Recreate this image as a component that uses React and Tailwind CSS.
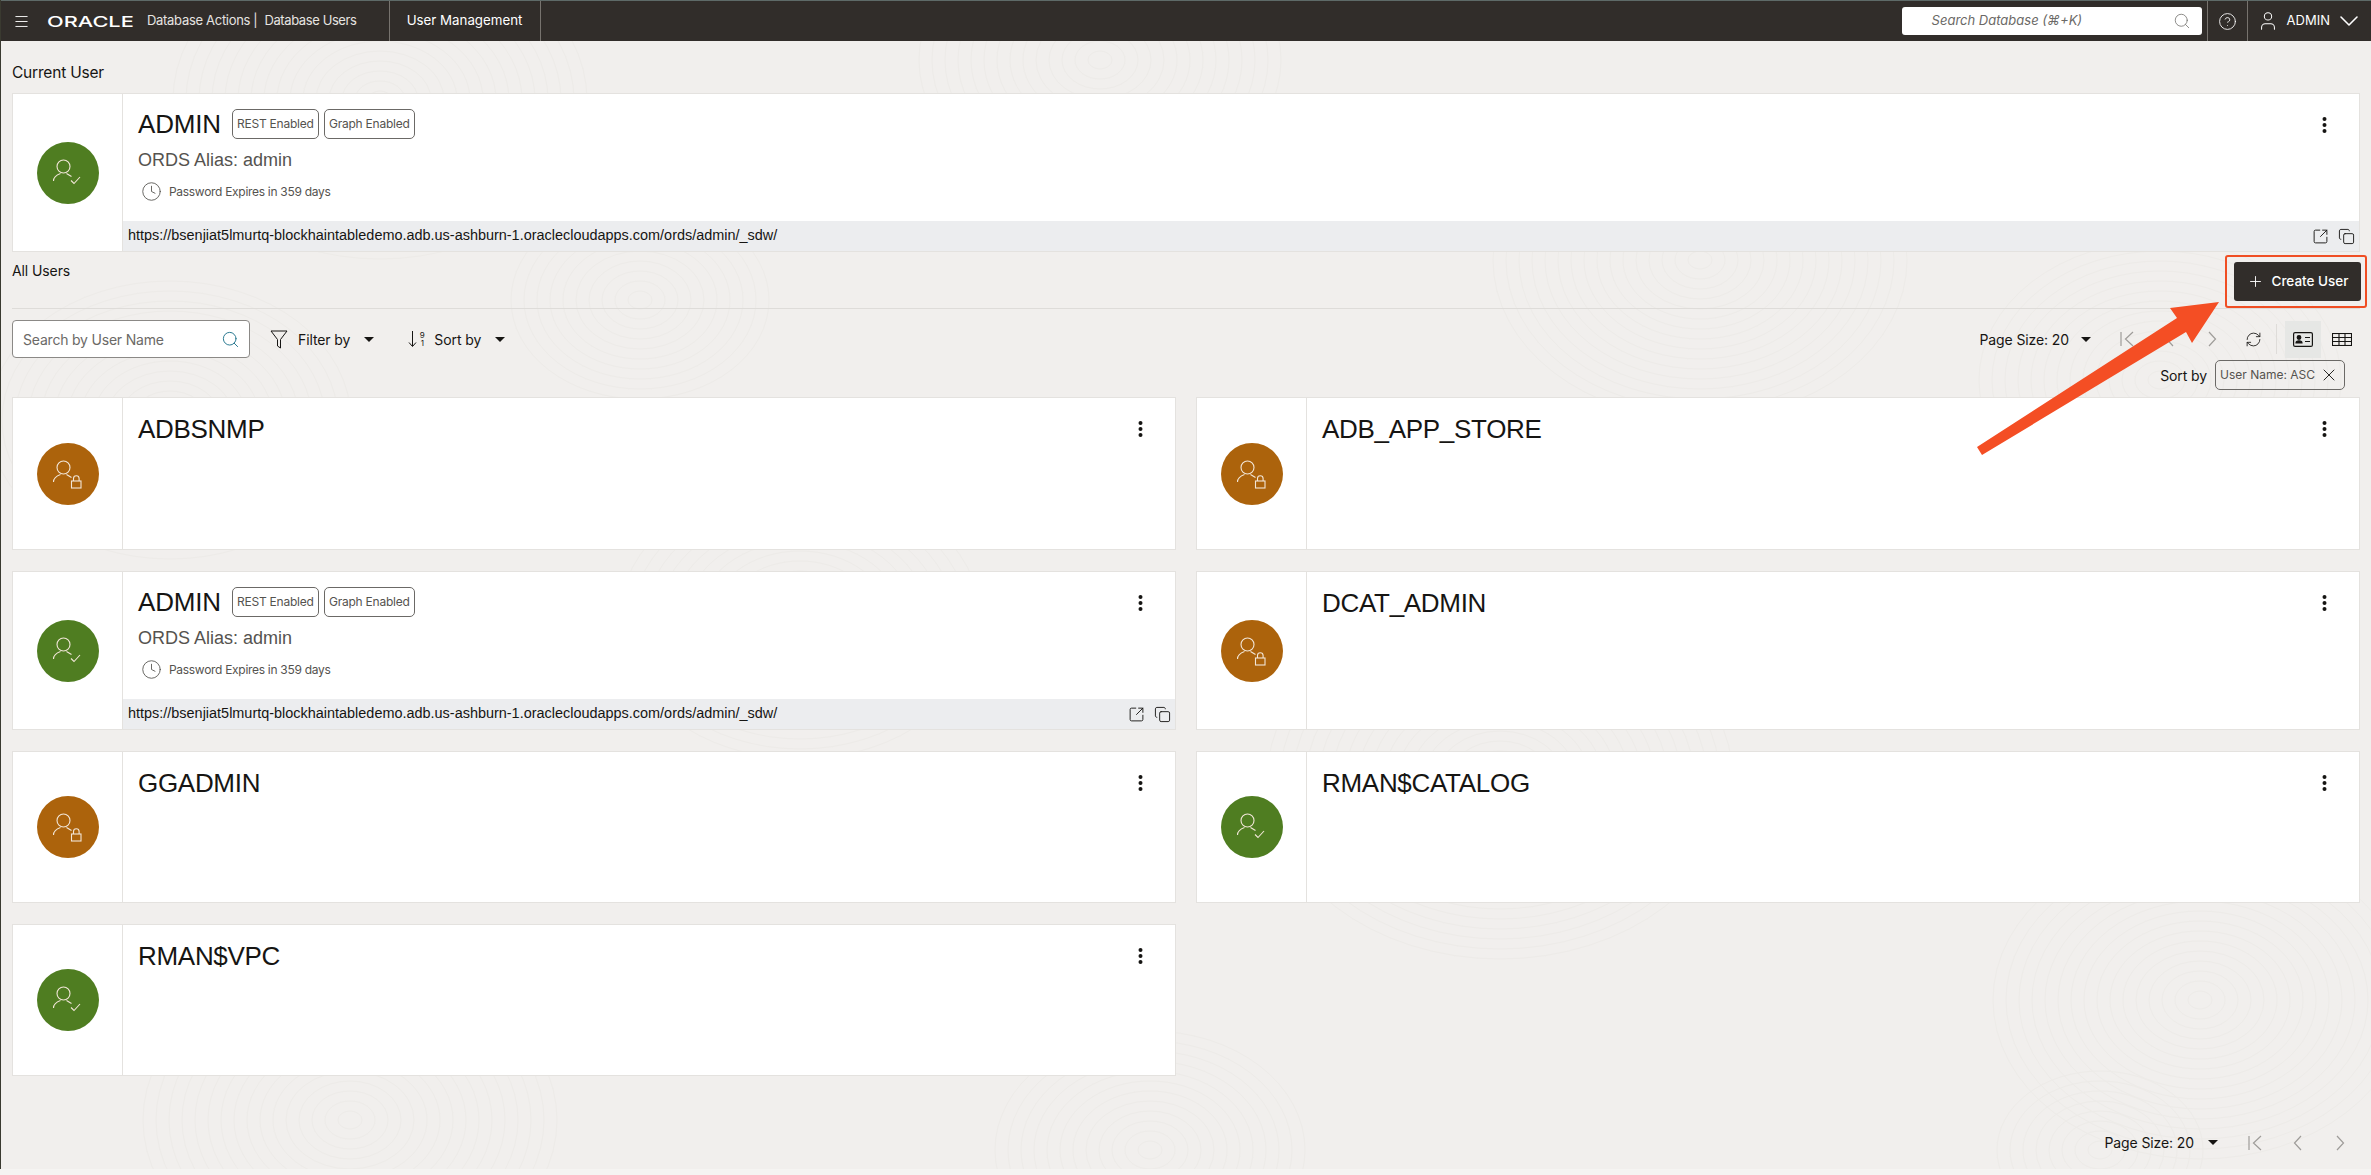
import { Search, Plus, RefreshCw, X, ChevronDown, Clock, Copy, SquareArrowOutUpRight, CircleHelp, User, Menu } from 'lucide-react';

const URL_TEXT = 'https://bsenjiat5lmurtq-blockhaintabledemo.adb.us-ashburn-1.oraclecloudapps.com/ords/admin/_sdw/';

function Caret({ className = '' }) {
  return <span className={`inline-block w-0 h-0 border-l-[5px] border-r-[5px] border-t-[5px] border-l-transparent border-r-transparent border-t-[#161513] ${className}`} />;
}

function Dots() {
  return (
    <svg className="mt-[23px] shrink-0" width="5" height="16" viewBox="0 0 5 16" fill="#161513">
      <circle cx="2.5" cy="2" r="2" />
      <circle cx="2.5" cy="8" r="2" />
      <circle cx="2.5" cy="14" r="2" />
    </svg>
  );
}

function UserAvatar({ locked }) {
  return (
    <div className={`w-[62px] h-[62px] rounded-full flex items-center justify-center ${locked ? 'bg-[#ac630c]' : 'bg-[#4f7d21]'}`}>
      <svg width="40" height="40" viewBox="0 0 40 40" fill="none" stroke="#f2e6d8" strokeWidth="1.1">
        <circle cx="15.5" cy="13.5" r="6.5" />
        <path d="M5.5 28c0-4 3-6 7-7.5M18.5 20.5l5 3" />
        {locked ? (
          <>
            <rect x="23.5" y="27" width="9.5" height="7" />
            <path d="M25.5 27v-2.5a2.8 2.8 0 0 1 5.6 0V27" />
          </>
        ) : (
          <path d="M23 27.5l3 3 6-6.5" />
        )}
      </svg>
    </div>
  );
}

function AdminInfo() {
  return (
    <>
      <div className="flex items-center h-[30px] mt-[15px]">
        <span className="text-[26px] leading-none text-[#161513] tracking-[-0.2px] mr-[11px]">ADMIN</span>
        <span className="h-[30px] w-[87px] flex items-center justify-center border border-[#6b6966] rounded-[5px] text-[12px] text-[#55534f] font-['Inter'] tracking-[-0.25px] mr-[5px]">REST Enabled</span>
        <span className="h-[30px] w-[91px] flex items-center justify-center border border-[#6b6966] rounded-[5px] text-[12px] text-[#55534f] font-['Inter'] tracking-[-0.25px]">Graph Enabled</span>
      </div>
      <div className="text-[18px] leading-[22px] mt-[10px] text-[#55534f]">ORDS Alias: admin</div>
      <div className="flex items-center mt-[10px] ml-[3px] text-[12px] text-[#55534f] font-['Inter'] tracking-[-0.3px]">
        <Clock size={21} strokeWidth={1} className="mr-[7px]" />
        Password Expires in 359 days
      </div>
    </>
  );
}

function UrlStrip() {
  return (
    <div className="h-[30px] shrink-0 bg-[#ecedef] flex items-center justify-between pl-[5px] pr-[4px] text-[14.45px] text-[#161513]">
      <span>{URL_TEXT}</span>
      <span className="flex items-center gap-[9px]">
        <SquareArrowOutUpRight size={17} strokeWidth={1.3} />
        <Copy size={17} strokeWidth={1.3} />
      </span>
    </div>
  );
}

function UserCard({ name, locked, admin, className = '' }) {
  return (
    <div className={`flex bg-white border border-[#e4e2df] ${className}`}>
      <div className="w-[110px] shrink-0 border-r border-[#e4e2df] flex items-center justify-center">
        <UserAvatar locked={locked} />
      </div>
      <div className="flex-1 flex flex-col min-w-0">
        <div className="flex-1 flex justify-between pl-[15px] pr-[32px]">
          {admin ? (
            <div><AdminInfo /></div>
          ) : (
            <div className="text-[26px] leading-none tracking-[-0.3px] text-[#161513] pt-[18px]">{name}</div>
          )}
          <Dots />
        </div>
        {admin && <UrlStrip />}
      </div>
    </div>
  );
}

function Pager() {
  return (
    <div className="flex items-center text-[#9e9c99]">
      <svg width="14" height="16" viewBox="0 0 14 16" fill="none" stroke="currentColor" strokeWidth="1.2">
        <path d="M1 1v14M13 1L5.5 8l7.5 7" />
      </svg>
      <svg className="ml-[31px]" width="9" height="16" viewBox="0 0 9 16" fill="none" stroke="currentColor" strokeWidth="1.2">
        <path d="M8 1L1.5 8 8 15" />
      </svg>
      <svg className="ml-[34px]" width="9" height="16" viewBox="0 0 9 16" fill="none" stroke="currentColor" strokeWidth="1.2">
        <path d="M1 1l6.5 7L1 15" />
      </svg>
    </div>
  );
}

// faint swirl texture of the page background
function Swirls() {
  const centers = [
    [380, 100, 16], [1100, 60, 14], [1700, 260, 16], [2160, 380, 14],
    [170, 420, 14], [800, 620, 14], [1500, 780, 18], [2200, 1000, 16],
    [350, 1120, 16], [1150, 1150, 12], [2100, 1150, 8], [640, 300, 10],
  ];
  return (
    <svg className="absolute left-0 top-0" width="2371" height="1175" fill="none" stroke="#edebe8" strokeWidth="1">
      {centers.flatMap(([cx, cy, n]) =>
        Array.from({ length: n }, (_, i) => (
          <ellipse key={`${cx}-${i}`} cx={cx} cy={cy} rx={12 + i * 13} ry={9 + i * 10} />
        ))
      )}
    </svg>
  );
}

export default function App() {
  return (
    <div className="relative h-[1175px] overflow-hidden bg-[#f1efed] font-['Liberation_Sans',sans-serif] text-[#161513]">
      <Swirls />
      <div className="relative h-full border-l border-l-[#3a3a30]">
        <header className="h-[41px] bg-[#312d2a] border-t border-t-[#5e6a68] flex items-center text-white font-['Inter']">
          <Menu size={17} strokeWidth={1.3} className="ml-[12px] mr-[17px]" />
          <span className="w-[95px] inline-block text-[15px] font-medium leading-none origin-left scale-x-[1.45] whitespace-nowrap">ORACLE</span>
          <span className="ml-[5px] text-[13px] tracking-[-0.3px] text-[#e6e4e1] whitespace-nowrap">Database Actions</span>
          <span className="ml-[3px] text-[13px] text-[#e6e4e1]">|</span>
          <span className="ml-[7px] text-[13px] tracking-[-0.4px] text-[#e6e4e1] whitespace-nowrap">Database Users</span>
          <div className="ml-[32px] w-[152px] h-full border-x border-[#77736e] flex items-center justify-center text-[13.3px]">User Management</div>
          <div className="ml-auto mr-[5px] w-[300px] h-[28px] bg-white rounded-[3px] flex items-center justify-between pl-[30px] pr-[11px] text-[#6b6966] text-[13px] italic">
            <span>Search Database (⌘+K)</span>
            <Search size={18} strokeWidth={1} />
          </div>
          <div className="w-[41px] h-full border-x border-[#77736e] flex items-center justify-center">
            <CircleHelp size={19} strokeWidth={1.1} />
          </div>
          <div className="flex items-center pl-[9px] pr-[6px] text-[13px]">
            <User size={22} strokeWidth={1.1} className="mr-[8px]" />
            ADMIN
            <ChevronDown size={32} strokeWidth={1.2} className="ml-[3px]" />
          </div>
        </header>

        <main className="pl-[11px] pr-[11px]">
          <div className="pt-[23px] text-[15.5px] leading-[17px] font-['Inter'] tracking-[-0.2px]">Current User</div>
          <UserCard admin className="h-[159px] mt-[12px]" />

          <div className="h-[57px] border-b border-[#dedcd9]">
            <div className="text-[14px] leading-[16px] pt-[11px] font-['Inter'] tracking-[-0.1px]">All Users</div>
          </div>

          <div className="flex items-center h-[60px]">
            <div className="w-[238px] h-[38px] bg-white border border-[#8b8986] rounded-[4px] flex items-center justify-between pl-[10px] pr-[9px] text-[14px] text-[#6b6966] font-['Inter'] tracking-[-0.2px]">
              <span>Search by User Name</span>
              <Search size={19} strokeWidth={1.2} className="text-[#22748c]" />
            </div>
            <svg className="ml-[20px] mr-[10px]" width="18" height="19" viewBox="0 0 18 19" fill="none" stroke="#161513" strokeWidth="1">
              <path d="M1 1h16l-6.5 8.5V18l-3-2V9.5z" />
            </svg>
            <span className="text-[14px] font-['Inter'] tracking-[-0.1px] mr-[14px]">Filter by</span>
            <Caret />
            <svg className="ml-[34px] mr-[2px]" width="9" height="18" viewBox="0 0 9 18" fill="none" stroke="#161513" strokeWidth="1">
              <path d="M4.5 1v15M1 12.5l3.5 4 3.5-4" />
            </svg>
            <span className="flex flex-col items-center w-[6px] mr-[9px] text-[8px] leading-[8px] font-['Inter']">
              <span>9</span>
              <span>1</span>
            </span>
            <span className="text-[14px] font-['Inter'] tracking-[-0.1px] mr-[14px]">Sort by</span>
            <Caret />
            <div className="ml-auto flex items-center text-[14px] font-['Inter'] tracking-[-0.1px]">
              <span className="mr-[12px]">Page Size: 20</span>
              <Caret />
              <div className="ml-[29px]"><Pager /></div>
              <RefreshCw size={17} strokeWidth={1.2} className="ml-[28px] text-[#161513]" />
              <div className="ml-[14px] w-px h-[30px] bg-[#dedcd9]" />
              <div className="ml-[8px] w-[36px] h-[37px] bg-[#e6e7e5] flex items-center justify-center">
                <svg width="20" height="15" viewBox="0 0 20 15" fill="none" stroke="#161513" strokeWidth="1.2">
                  <rect x="0.6" y="0.6" width="18.8" height="13.8" rx="1.5" />
                  <circle cx="6" cy="5.5" r="1.8" fill="#161513" />
                  <path d="M3 11c0-3 6-3 6 0z" fill="#161513" />
                  <path d="M12 5.5h5M12 9.5h5" />
                </svg>
              </div>
              <div className="ml-[11px] mr-[8px]">
                <svg width="20" height="13" viewBox="0 0 20 13" fill="none" stroke="#161513" strokeWidth="1.1">
                  <rect x="0.5" y="0.5" width="19" height="12" />
                  <path d="M0.5 4.5h19M0.5 8.5h19M7 0.5v12M13 0.5v12" />
                </svg>
              </div>
            </div>
          </div>

          <div className="flex justify-end items-center h-[30px] -mt-[9px] pr-[15px]">
            <span className="text-[14px] font-['Inter'] tracking-[-0.1px] mr-[8px]">Sort by</span>
            <div className="w-[130px] h-[30px] border border-[#6b6966] rounded-[5px] flex items-center justify-between pl-[4px] pr-[5px] text-[12px] text-[#55534f] font-['Inter']">
              <span>User Name: ASC</span>
              <X size={20} strokeWidth={1.1} className="text-[#161513]" />
            </div>
          </div>

          <div className="grid grid-cols-2 gap-x-[20px] gap-y-[21px] mt-[7px] grid-rows-[153px_159px_152px_152px]">
            <UserCard name="ADBSNMP" locked />
            <UserCard name="ADB_APP_STORE" locked />
            <UserCard admin />
            <UserCard name="DCAT_ADMIN" locked />
            <UserCard name="GGADMIN" locked />
            <UserCard name="RMAN$CATALOG" />
            <UserCard name="RMAN$VPC" />
          </div>

          <div className="flex justify-end items-center mt-[56px] pr-[15px] text-[14px] font-['Inter'] tracking-[-0.1px]">
            <span className="mr-[14px]">Page Size: 20</span>
            <Caret />
            <div className="ml-[30px]"><Pager /></div>
          </div>
        </main>
      </div>

      <div className="absolute left-0 right-0 bottom-0 h-[6px] bg-[#f5f4f2]" />

      {/* annotation over the button */}
      <div className="absolute left-[2225px] top-[255px] w-[142px] h-[53px] border-2 border-[#f04e23] rounded-[3px]">
        <div className="absolute left-[7px] top-[5px] w-[127px] h-[39px] bg-[#312d2a] rounded-[3px] text-white flex items-center justify-center text-[13.5px] font-['Inter'] font-medium">
          <Plus size={17} strokeWidth={1.3} className="mr-[8px]" />
          Create User
        </div>
      </div>
      <svg className="absolute left-0 top-0" width="2371" height="1175" viewBox="0 0 2371 1175">
        <polygon points="1977,447 2177,318 2170,308 2219,302 2192,343 2186,332 1982,455" fill="#f44e24" />
      </svg>
    </div>
  );
}
